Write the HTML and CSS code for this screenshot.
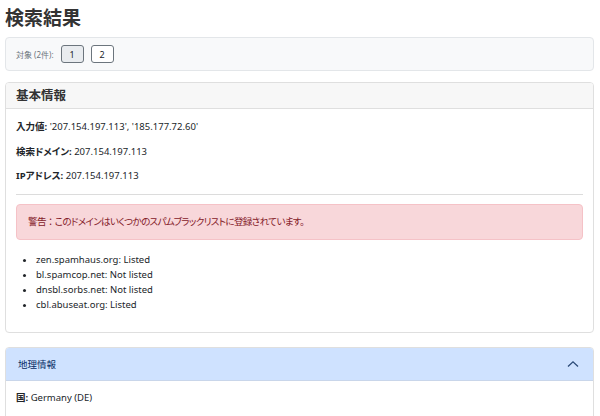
FILE: index.html
```html
<!DOCTYPE html>
<html lang="ja">
<head>
<meta charset="utf-8">
<title>検索結果</title>
<link rel="stylesheet" href="styles.css">
</head>
<body>
<div class="page">
  <h1 class="title">検索結果</h1>
  <div class="targets">
    <span class="targets-label">対象 (2件):</span>
    <button class="tbtn active">1</button>
    <button class="tbtn">2</button>
  </div>

  <section class="card">
    <div class="card-header">基本情報</div>
    <div class="card-body">
      <p class="row"><b>入力値:</b> '207.154.197.113', '185.177.72.60'</p>
      <p class="row"><b>検索ドメイン:</b> 207.154.197.113</p>
      <p class="row"><b>IPアドレス:</b> 207.154.197.113</p>
      <hr class="sep">
      <div class="alert">警告<span class="fw">：</span>このドメインはいくつかのスパムブラックリストに登録されています。</div>
      <ul class="bl">
        <li>zen.spamhaus.org: Listed</li>
        <li>bl.spamcop.net: Not listed</li>
        <li>dnsbl.sorbs.net: Not listed</li>
        <li>cbl.abuseat.org: Listed</li>
      </ul>
    </div>
  </section>

  <section class="card geo">
    <div class="geo-header">
      <span>地理情報</span>
      <svg class="chev" width="12" height="8" viewBox="0 0 12 8"><path d="M1 6.5 L6 1.8 L11 6.5" fill="none" stroke="#2b4a78" stroke-width="1.3"/></svg>
    </div>
    <div class="card-body">
      <p class="row"><b>国:</b> Germany (DE)</p>
    </div>
  </section>
</div>
</body>
</html>
```
FILE: styles.css
```css
* { box-sizing: border-box; }
html, body { margin: 0; padding: 0; background: #fff; }
body {
  font-family: "Noto Sans", "Noto Sans CJK JP", sans-serif;
  font-feature-settings: "palt";
  color: #212529;
  font-size: 9.5px;
}
.page { padding: 0 6px 0 5px; }
.title {
  margin: 0;
  padding-top: 4px;
  font-size: 19px;
  line-height: 28px;
  font-weight: 700;
  color: #333;
}
.targets {
  margin-top: 5px;
  height: 34px;
  background: #f8f9fa;
  border: 1px solid #e3e6e9;
  border-radius: 4px;
  display: flex;
  align-items: center;
  padding-left: 10px;
  gap: 7px;
}
.targets-label { font-size: 8px; color: #6c757d; }
.tbtn {
  width: 23px;
  height: 18px;
  padding: 0;
  border: 1px solid #6c757d;
  border-radius: 3px;
  background: #fff;
  font-family: inherit;
  font-size: 9px;
  color: #212529;
}
.tbtn.active { background: #e9ecef; }

.card {
  margin-top: 11px;
  border: 1px solid #dfdfdf;
  border-radius: 4px;
  overflow: hidden;
}
.card-header {
  height: 26px;
  background: #f7f7f7;
  border-bottom: 1px solid #dfdfdf;
  padding: 0 10px;
  font-size: 12.5px;
  font-weight: 700;
  line-height: 25px;
  color: #333;
}
.card-body { padding: 6px 10px 20px; }
.row { margin: 0; line-height: 24.5px; }
.row b { font-weight: 700; }
.sep { border: 0; border-top: 1px solid #dcdcdc; margin: 5px 0 9px; }
.alert {
  background: #f8d7da;
  border: 1px solid #f5c2c7;
  border-radius: 4px;
  color: #842029;
  padding: 0 11px;
  height: 36px;
  line-height: 34px;
  font-size: 9.6px;
  letter-spacing: -0.7px;
}
.fw { font-feature-settings: normal; }
.bl {
  margin: 12px 0 0;
  padding-left: 20px;
  line-height: 15px;
}
.geo { margin-top: 14px; }
.geo-header {
  height: 33px;
  background: #cfe2ff;
  display: flex;
  align-items: center;
  justify-content: space-between;
  padding: 0 14px 0 12px;
  color: #052c65;
  border-bottom: 1px solid #c9d6ea;
}
.geo .card-body { padding-top: 5px; }
```
